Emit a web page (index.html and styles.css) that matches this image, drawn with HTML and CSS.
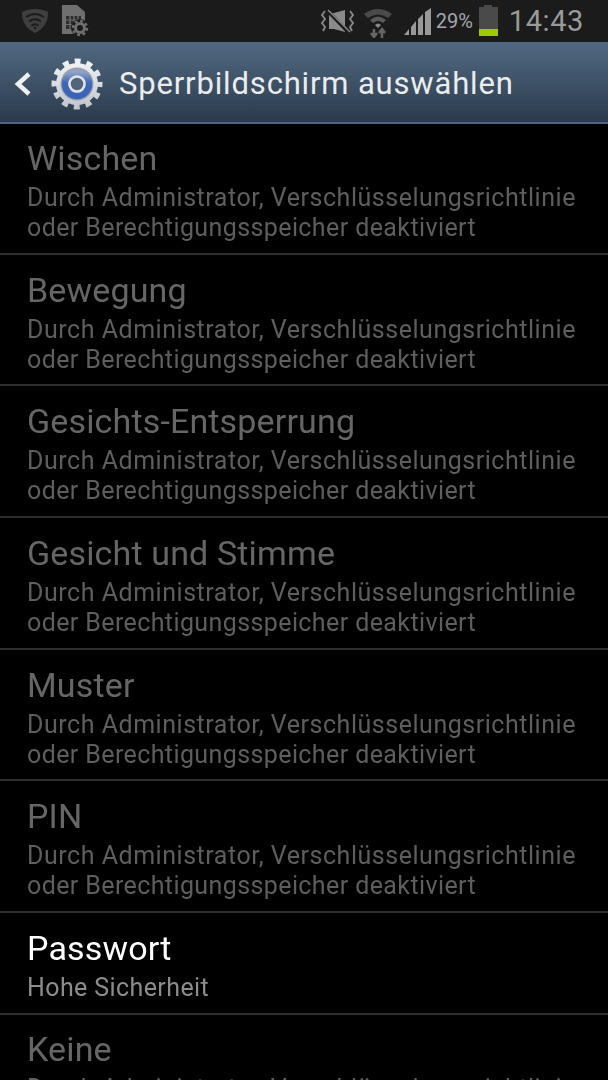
FILE: index.html
```html
<!DOCTYPE html>
<html lang="de">
<head>
    <meta charset="UTF-8">
    <title>Sperrbildschirm</title>
    <link rel="stylesheet" href="styles.css">
</head>
<body>
    <div class="status">
        <div class="status-left">
            <svg class="ic-shield" width="26" height="26" viewBox="0 0 26 26">
                <path d="M13 1C18 1 22 2 26 4C26 13 23 20 13 25C3 20 0 13 0 4C4 2 8 1 13 1Z" fill="#3f3f3f"/>
                <path d="M4 9Q13 3 22 9M7 13.500Q13 9 19 13.500M9.500 18Q13 14.500 16.500 18" stroke="#1b1b1b" stroke-width="1.800" fill="none"/>
                <circle cx="13" cy="20" r="1.300" fill="#1b1b1b"/>
            </svg>
            <svg class="ic-sim" width="27" height="32" viewBox="0 0 27 32">
                <path d="M0 0H15L23 7V29H0Z" fill="#6f6f6f"/>
                <path d="M4 11H19V24H4Z" fill="#2e2e2e"/>
                <path d="M8 11V24M12 11V24M16 11V24M4 15H19M4 19.500H19" stroke="#6f6f6f" stroke-width="1.200"/>
                <circle cx="18" cy="23" r="9" fill="#1b1b1b"/>
                <circle cx="18" cy="23" r="4.500" fill="none" stroke="#707070" stroke-width="3"/>
                <circle cx="18" cy="23" r="7" fill="none" stroke="#707070" stroke-width="2.500" stroke-dasharray="2.700 2.800"/>
            </svg>
        </div>
        <div class="status-right">
            <svg class="ic-mute" width="33" height="24" viewBox="0 0 33 24">
                <path d="M8 4H13L24 1V23L13 20H8Z" fill="#8a8a8a"/>
                <path d="M5 0L28 24" stroke="#1b1b1b" stroke-width="3.500"/>
                <path d="M7 1L29 23" stroke="#8a8a8a" stroke-width="1.500"/>
                <path d="M4 2L1 6L4 10L1 14L4 18L2 22M29 2L32 6L29 10L32 14L29 18L31 22" stroke="#8a8a8a" stroke-width="1.800" fill="none"/>
            </svg>
            <svg class="ic-wifi" width="28" height="31" viewBox="0 0 28 31">
                <path d="M0 7Q14 -3 28 7L24 11Q14 4 4 11Z" fill="#4a4a4a"/>
                <path d="M6 13Q14 6 22 13L19 16Q14 12 9 16Z" fill="#5a5a5a"/>
                <path d="M11 18Q14 15 17 18L14 21Z" fill="#8a8a8a"/>
                <path d="M10 22V30M7 26L10 30L13 26" stroke="#666" stroke-width="2.500" fill="none"/>
                <path d="M18 31V22M15 26L18 22L21 26" stroke="#666" stroke-width="2.500" fill="none"/>
            </svg>
            <svg class="ic-signal" width="30" height="28" viewBox="0 0 30 28">
                <path d="M0 27L5 21V27ZM7 19L12 13V27H7ZM14 11L19 6V27H14ZM21 4L27 0V27H21Z" fill="#999"/>
            </svg>
            <span class="pct">29%</span>
            <div class="battery">
                <div class="battery-cap"></div>
                <div class="battery-body"><div class="battery-fill"></div></div>
            </div>
            <span class="clock">14:43</span>
        </div>
    </div>
    <div class="bar">
        <svg class="ic-back" width="18" height="26" viewBox="0 0 18 26">
            <path d="M15 3L4 13L15 23" fill="none" stroke="#f0f0f0" stroke-width="4.500"/>
        </svg>
        <svg class="ic-gear" width="52" height="52" viewBox="0 0 52 52">
            <defs>
                <linearGradient id="steel" x1="0" y1="0" x2="0" y2="1">
                    <stop offset="0" stop-color="#f0f1f3"/>
                    <stop offset="1" stop-color="#c4c7cc"/>
                </linearGradient>
                <linearGradient id="blue" x1="0" y1="0" x2="0" y2="1">
                    <stop offset="0" stop-color="#8fa3c4"/>
                    <stop offset=".45" stop-color="#3f68bb"/>
                    <stop offset="1" stop-color="#3a62b6"/>
                </linearGradient>
            </defs>
            <circle cx="26" cy="26" r="21" fill="url(#steel)"/>
            <circle cx="26" cy="26" r="22.500" fill="none" stroke="url(#steel)" stroke-width="6" stroke-dasharray="5.890 5.890" stroke-dashoffset="2.945"/>
            <circle cx="26" cy="26" r="16.500" fill="#9aa1ac"/>
            <circle cx="26" cy="26" r="12" fill="none" stroke="url(#blue)" stroke-width="6.500"/>
            <circle cx="26" cy="26" r="7.500" fill="#51667c" stroke="#e2e4e8" stroke-width="2.500"/>
        </svg>
        <span class="bar-title">Sperrbildschirm auswählen</span>
    </div>
    <ul class="list">
        <li class="row off"><div class="row-title">Wischen</div><div class="row-sub">Durch Administrator, Verschlüsselungsrichtlinie<br><span class="line2">oder Berechtigungsspeicher deaktiviert</span></div></li>
        <li class="row off"><div class="row-title">Bewegung</div><div class="row-sub">Durch Administrator, Verschlüsselungsrichtlinie<br><span class="line2">oder Berechtigungsspeicher deaktiviert</span></div></li>
        <li class="row off"><div class="row-title">Gesichts-Entsperrung</div><div class="row-sub">Durch Administrator, Verschlüsselungsrichtlinie<br><span class="line2">oder Berechtigungsspeicher deaktiviert</span></div></li>
        <li class="row off"><div class="row-title">Gesicht und Stimme</div><div class="row-sub">Durch Administrator, Verschlüsselungsrichtlinie<br><span class="line2">oder Berechtigungsspeicher deaktiviert</span></div></li>
        <li class="row off"><div class="row-title">Muster</div><div class="row-sub">Durch Administrator, Verschlüsselungsrichtlinie<br><span class="line2">oder Berechtigungsspeicher deaktiviert</span></div></li>
        <li class="row off"><div class="row-title">PIN</div><div class="row-sub">Durch Administrator, Verschlüsselungsrichtlinie<br><span class="line2">oder Berechtigungsspeicher deaktiviert</span></div></li>
        <li class="row"><div class="row-title">Passwort</div><div class="row-sub"><span class="line2">Hohe Sicherheit</span></div></li>
        <li class="row off"><div class="row-title">Keine</div><div class="row-sub">Durch Administrator, Verschlüsselungsrichtlinie<br><span class="line2">oder Berechtigungsspeicher deaktiviert</span></div></li>
    </ul>
</body>
</html>
```

FILE: styles.css
```css
*{margin:0;padding:0;box-sizing:border-box;}
html,body{height:1080px;overflow:hidden;}
body{background:#000;font-family:"Roboto",sans-serif;width:608px;}

.status{height:42px;background:#1b1b1b;display:flex;justify-content:space-between;align-items:center;}
.status-left{display:flex;align-items:center;padding-left:22px;}
.ic-shield{margin-top:-1px;}
.ic-sim{margin-left:14px;margin-top:-1px;}
.status-right{display:flex;align-items:center;padding-right:24px;}
.ic-mute{margin-top:-1px;}
.ic-wifi{margin-left:10px;margin-top:2px;}
.ic-signal{margin-left:12px;margin-top:1px;}
.pct{font-size:20px;color:#a4a8ae;margin-left:2px;width:38px;}
.battery{margin-left:5px;width:19px;display:flex;flex-direction:column;align-items:center;margin-top:-2px;}
.battery-cap{width:8px;height:2px;background:#4a4a4a;}
.battery-body{width:19px;height:29px;background:#4a4a4a;display:flex;flex-direction:column;justify-content:flex-end;}
.battery-fill{height:7px;background:#9ccb00;}
.clock{font-size:29px;color:#9a9a9a;margin-left:11px;letter-spacing:.6px;}

.bar{height:82px;background:linear-gradient(#506a82,#2b3a4c);border-bottom:2px solid #4b6785;display:flex;align-items:center;padding:3px 0 0 14px;}
.ic-gear{margin-left:19px;}
.bar-title{font-size:31px;letter-spacing:.84px;color:#ececec;margin-left:16px;}

.list{list-style:none;filter:blur(.3px);}
.row{padding:15px 0 0 27px;height:131.700px;border-bottom:2px solid #2e2e2e;}
.row:first-child{height:130.500px;padding-top:14px;}
.row:nth-child(7){height:102.500px;}
.row:last-child{padding-top:14px;}
.row-title{font-size:34px;line-height:40px;letter-spacing:.15px;color:#fff;}
.row-sub{font-size:25px;line-height:30px;letter-spacing:.53px;color:#8c8c8c;margin-top:5px;}
.line2{letter-spacing:.4px;}
.off .row-title{color:#666;}
.off .row-sub{color:#5e5e5e;}
```
